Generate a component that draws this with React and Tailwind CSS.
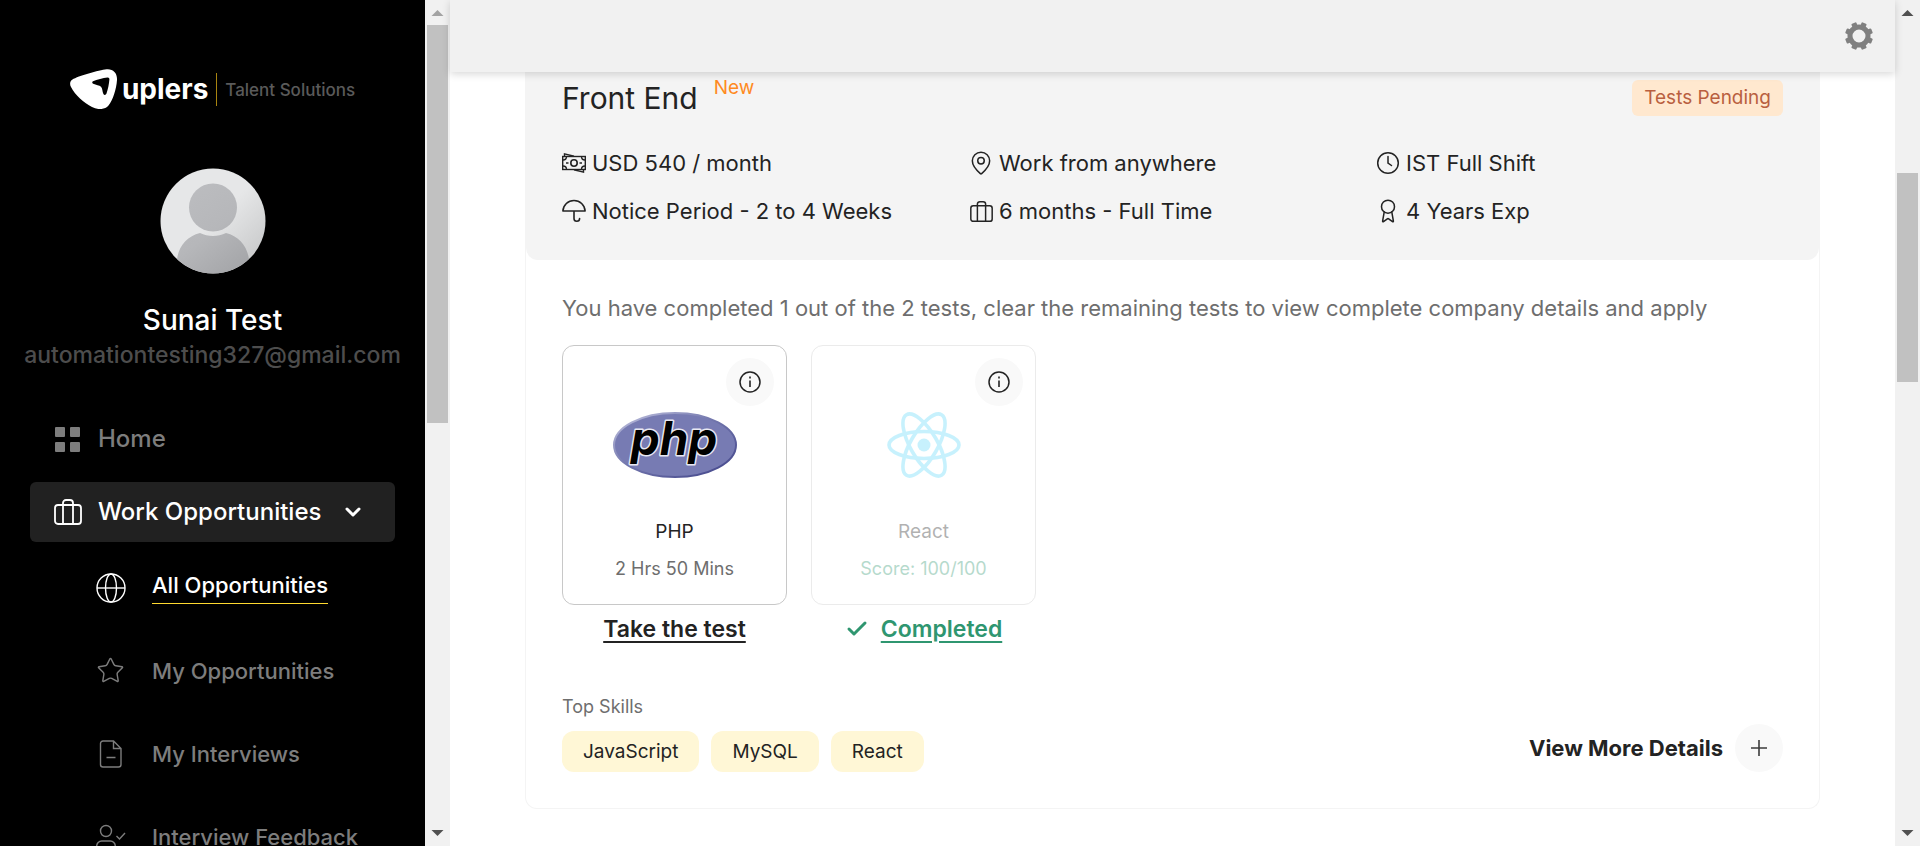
import React from 'react';
import { Star, MapPin, Award, Check } from 'lucide-react';

function Scrollbar({ atTop, thumb }) {
  return (
    <div aria-hidden="true" className="flex w-[25px] shrink-0 flex-col items-center bg-[#f1f1f1]">
      <svg width="25" height="25" viewBox="0 0 25 25" className="shrink-0">
        <path d="M6.5 16h12l-6-6z" fill={atTop ? '#a3a3a3' : '#505050'} />
      </svg>
      <div className="min-h-0 w-[21px] flex-1">
        <div className={thumb} />
      </div>
      <svg width="25" height="25" viewBox="0 0 25 25" className="shrink-0">
        <path d="M6.5 9h12l-6 6z" fill="#505050" />
      </svg>
    </div>
  );
}

function Suitcase({ size, stroke }) {
  return (
    <svg width={size} height={size} viewBox="0 0 28 28" fill="none" stroke="currentColor" strokeWidth={stroke}>
      <rect x="1" y="7" width="26" height="19" rx="3" />
      <path d="M9 26V5a3 3 0 0 1 3-3h4a3 3 0 0 1 3 3v21" />
    </svg>
  );
}

function Money() {
  return (
    <svg width="24" height="20" viewBox="0 0 24 20" fill="none" stroke="currentColor" strokeWidth="1.4">
      <rect x="0.7" y="3.5" width="22.6" height="13" />
      <circle cx="12" cy="10" r="3.2" strokeWidth="1.6" />
      <path d="M4 10h2.5M17.5 10H20M2.5 3.3V.9L12 3.3M21.5 16.7v2.4L12 16.7" />
      <path d="M1 7c2 0 3.5-1.5 3.5-3.5M23 7c-2 0-3.5-1.5-3.5-3.5M1 13c2 0 3.5 1.5 3.5 3.5M23 13c-2 0-3.5 1.5-3.5 3.5" />
    </svg>
  );
}

function Umbrella() {
  return (
    <svg width="24" height="24" viewBox="0 0 24 24" fill="none" stroke="currentColor" strokeWidth="1.6" strokeLinecap="round" strokeLinejoin="round">
      <path d="M.9 12C1.3 6 6 1.5 12 1.5S22.7 6 23.1 12zM12 12v7.500a2.800 2.800 0 0 0 5.600 0" />
    </svg>
  );
}

function Clock() {
  return (
    <svg width="24" height="24" viewBox="0 0 24 24" fill="none" stroke="currentColor" strokeWidth="1.5" strokeLinecap="round">
      <circle cx="12" cy="12" r="10.3" />
      <path d="M12 5.500V12l3.500 2.500" />
    </svg>
  );
}

function Globe() {
  return (
    <svg width="30" height="30" viewBox="0 0 30 30" fill="none" stroke="currentColor" strokeWidth="1.4">
      <circle cx="15" cy="15" r="14" />
      <ellipse cx="15" cy="15" rx="5.500" ry="14" />
      <path d="M1 15h28" />
    </svg>
  );
}

function Page() {
  return (
    <svg width="30" height="30" viewBox="0 0 30 30" fill="none" stroke="currentColor" strokeWidth="1.4">
      <path d="M17.500 2H7a2.500 2.500 0 0 0-2.500 2.500v21A2.500 2.500 0 0 0 7 28h15.500a2.500 2.500 0 0 0 2.500-2.500V9.500zV9.500H25M10.500 18.500h9" />
    </svg>
  );
}

function UserCheck() {
  return (
    <svg width="30" height="30" viewBox="0 0 30 30" fill="none" stroke="currentColor" strokeWidth="1.4">
      <circle cx="10" cy="9" r="5.500" />
      <path d="M.7 27v-3a5 5 0 0 1 5-5h8.600a5 5 0 0 1 5 5v3M20.500 14l3 3 5.500-6" />
    </svg>
  );
}

function Gear() {
  return (
    <svg width="28" height="28" viewBox="-14 -14 28 28">
      <circle r="9" fill="none" stroke="#808080" strokeWidth="5" />
      {[22.5, 67.5, 112.5, 157.5, 202.5, 247.5, 292.5, 337.5].map((a) => (
        <rect key={a} x="-2.700" y="-14" width="5.400" height="5" rx="1" fill="#808080" transform={`rotate(${a})`} />
      ))}
    </svg>
  );
}

function InfoIcon() {
  return (
    <svg width="22" height="22" viewBox="0 0 22 22" fill="none" stroke="#232323" strokeWidth="1.5">
      <circle cx="11" cy="11" r="10" />
      <path d="M11 9.500v6.500M11 5.500v2" strokeWidth="1.600" />
    </svg>
  );
}

function PhpLogo() {
  return (
    <svg width="124" height="66" viewBox="0 0 124 66" role="img" aria-label="PHP logo" className="overflow-visible">
      <defs>
        <linearGradient id="phpEdge" x1="0" y1="0" x2="1" y2="1">
          <stop offset="0" stopColor="#c4c6e2" />
          <stop offset=".45" stopColor="#7377ad" />
          <stop offset="1" stopColor="#3f4288" />
        </linearGradient>
      </defs>
      <ellipse cx="62" cy="33" rx="61" ry="32" fill="#777bb3" stroke="url(#phpEdge)" strokeWidth="2" />
      <text x="61" y="43" textAnchor="middle" fontFamily="Inter, sans-serif" fontSize="46" fontWeight="700" fontStyle="italic" fill="#000" stroke="#e8e8f2" strokeWidth="3" strokeLinejoin="round" paintOrder="stroke">
        php
      </text>
    </svg>
  );
}

function ReactLogo() {
  return (
    <svg width="76" height="66" viewBox="-38 -33 76 66" fill="none" stroke="#61dafb" strokeWidth="3.600" role="img" aria-label="React logo">
      <circle r="6.500" fill="#61dafb" stroke="none" />
      <ellipse rx="35" ry="13.500" />
      <ellipse rx="35" ry="13.500" transform="rotate(60)" />
      <ellipse rx="35" ry="13.500" transform="rotate(120)" />
    </svg>
  );
}

function Logo() {
  return (
    <a href="#" className="flex h-10 items-center text-white">
      <svg width="48" height="40" viewBox="0 0 48 40">
        <path d="M2.500 10.500C8 7 29 1 36.500.2 43-.5 47.500 4 47 11c-.6 9-4 20-8.500 25.500C34.500 41 27.500 41 22 38 14 34 5 26 1 18-.6 14.800 0 12 2.500 10.500z" fill="#fff" />
        <path d="M23 12.200c4-1.700 10-3.200 14.500-3.700 1.300-.1 2 .7 1.900 2-.4 4.500-1.400 9.800-3 14.300-.5 1.300-2.300 1.500-3 .2-1.200-2.600-.8-5.500-2.400-7.200-1.600-1.600-5-1.600-7.800-3-1.200-.6-1.300-2-.2-2.600z" fill="#000" />
      </svg>
      <span className="ml-1 text-[28px] leading-8 font-bold">uplers</span>
      <span className="ml-2 h-[33px] w-px bg-[#a88410]" />
      <span className="ml-2 pt-0.5 text-[17px] leading-6 font-medium text-[#5a5a5a]">Talent Solutions</span>
    </a>
  );
}

function Avatar() {
  return (
    <svg width="106" height="106" viewBox="0 0 106 106" role="img" aria-label="Profile picture">
      <defs>
        <clipPath id="avatarClip"><circle cx="53" cy="53" r="52.500" /></clipPath>
        <linearGradient id="avatarBg" x1="0" y1="0" x2="1" y2="1">
          <stop offset=".5" stopColor="#e6e7e8" />
          <stop offset=".9" stopColor="#c8c9ca" />
        </linearGradient>
        <linearGradient id="avatarFg" gradientUnits="userSpaceOnUse" x1="20" y1="20" x2="85" y2="106">
          <stop offset="0" stopColor="#bcbdc0" />
          <stop offset=".5" stopColor="#b6b7ba" />
          <stop offset="1" stopColor="#a2a3a6" />
        </linearGradient>
      </defs>
      <g clipPath="url(#avatarClip)">
        <rect width="106" height="106" fill="url(#avatarBg)" />
        <circle cx="53" cy="39.500" r="24" fill="url(#avatarFg)" />
        <path d="M17 106V92c1-13 10-24 23-27 8 4 18 4 26 0 13 3 22 14 23 27v14z" fill="url(#avatarFg)" />
      </g>
    </svg>
  );
}

function SubLink({ icon, label, active }) {
  return (
    <li className="flex h-[83px] items-center">
      <a href="#" className={active ? 'flex items-center text-white' : 'flex items-center text-[#7d7d7d]'}>
        <span className="flex w-[56px] items-center">{icon}</span>
        <span className={active ? 'border-b border-[#ffda30] pb-1 text-[22px] leading-7 font-medium' : 'text-[22px] leading-7 font-medium'}>{label}</span>
      </a>
    </li>
  );
}

function Fact({ icon, children }) {
  return (
    <li className="flex items-center gap-1.5">
      <span className="flex w-6 justify-center">{icon}</span>
      <span className="text-[22px] leading-[30px]">{children}</span>
    </li>
  );
}

function TestCard({ logo, name, note, noteColor, done, children }) {
  return (
    <li className="flex w-[225px] flex-col items-center">
      <div className={done ? 'relative w-full rounded-xl border border-[#ebebeb]' : 'relative w-full rounded-xl border border-[#c8c8c8]'}>
        <div className={done ? 'flex flex-col items-center pt-[66px] pb-[23px] opacity-35' : 'flex flex-col items-center pt-[66px] pb-[23px]'}>
          {logo}
          <h3 className="mt-[42px] text-[19px] leading-6">{name}</h3>
          <p className={`mt-[13px] text-[18px] leading-6 ${noteColor}`}>{note}</p>
        </div>
        <button type="button" aria-label={`About the ${name} test`} className="absolute top-3 right-3 flex size-12 items-center justify-center rounded-full bg-[#f9f9f9]">
          <InfoIcon />
        </button>
      </div>
      {children}
    </li>
  );
}

export default function App() {
  return (
    <div className="flex h-screen overflow-hidden bg-white font-['Inter',sans-serif] text-[#232323]">
      <aside className="flex w-[425px] shrink-0 flex-col overflow-hidden bg-black pt-[69px]">
        <div className="flex flex-col items-center">
          <Logo />
          <div className="mt-[59px]"><Avatar /></div>
          <p className="mt-7 text-[28px] leading-9 font-medium text-white">Sunai Test</p>
          <p className="mt-px text-[23px] leading-8 font-medium text-[#4d4d4d]">automationtesting327@gmail.com</p>
        </div>
        <nav className="mt-[38px] px-[30px]">
          <a href="#" className="flex h-[60px] items-center pl-[25px] text-2xl font-medium text-[#7d7d7d]">
            <svg width="25" height="25" viewBox="0 0 25 25" fill="currentColor">
              <rect width="10" height="10" rx="1" />
              <rect x="15" width="10" height="10" rx="1" />
              <rect y="15" width="10" height="10" rx="1" />
              <rect x="15" y="15" width="10" height="10" rx="1" />
            </svg>
            <span className="ml-[18px]">Home</span>
          </a>
          <button type="button" className="mt-[13px] flex h-[60px] w-full items-center rounded-md bg-[#212121] pl-6 text-2xl font-medium text-white">
            <Suitcase size={28} stroke={1.8} />
            <span className="ml-4">Work Opportunities</span>
            <svg width="16" height="11" viewBox="0 0 16 11" fill="none" stroke="currentColor" strokeWidth="3" strokeLinecap="round" strokeLinejoin="round" className="ml-6">
              <path d="M2 2l6 6 6-6" />
            </svg>
          </button>
          <ul className="mt-1 pl-[66px]">
            <SubLink active label="All Opportunities" icon={<Globe />} />
            <SubLink label="My Opportunities" icon={<Star size={29} strokeWidth={1.2} strokeLinejoin="miter" />} />
            <SubLink label="My Interviews" icon={<Page />} />
            <SubLink label="Interview Feedback" icon={<UserCheck />} />
          </ul>
        </nav>
      </aside>
      <Scrollbar atTop thumb="h-[398px] bg-[#c1c1c1]" />

      <div className="flex min-w-0 flex-1 flex-col">
        <header className="relative z-10 flex h-[72px] shrink-0 items-center justify-end bg-[#f1f1f1] px-[22px] shadow-[0_2px_8px_rgba(0,0,0,0.16)]">
          <button type="button" aria-label="Settings"><Gear /></button>
        </header>
        <main className="px-[75px]">
          <article className="rounded-b-xl border border-t-0 border-[#f4f4f4]">
            <header className="rounded-b-xl bg-[#f4f4f4] px-9 pt-2 pb-[34px]">
              <div className="flex h-9 items-center">
                <h1 className="text-[30px] leading-9">Front End</h1>
                <span className="ml-4 self-start text-[19px] leading-4 text-[#ff8a1f]">New</span>
                <span className="ml-auto rounded-md bg-[#ffe8cf] px-3 text-[19px] leading-9 text-[#b95f3f]">Tests Pending</span>
              </div>
              <ul className="mt-8 grid grid-cols-3 gap-y-[18px]">
                <Fact icon={<Money />}>USD 540 / month</Fact>
                <Fact icon={<MapPin size={26} strokeWidth={1.4} className="shrink-0" />}>Work from anywhere</Fact>
                <Fact icon={<Clock />}>IST Full Shift</Fact>
                <Fact icon={<Umbrella />}>Notice Period - 2 to 4 Weeks</Fact>
                <Fact icon={<Suitcase size={23} stroke={1.8} />}>6 months - Full Time</Fact>
                <Fact icon={<Award size={26} strokeWidth={1.4} className="shrink-0" />}>4 Years Exp</Fact>
              </ul>
            </header>
            <div className="px-9 pt-[33px] pb-9">
              <p className="text-[22px] leading-[30px] text-[#6e6e6e]">
                You have completed 1 out of the 2 tests, clear the remaining tests to view complete company details and apply
              </p>
              <ul className="mt-[22px] flex gap-6">
                <TestCard name="PHP" note="2 Hrs 50 Mins" noteColor="text-[#6e6e6e]" logo={<PhpLogo />}>
                  <a href="#" className="mt-2.5 text-[23px] leading-7 font-semibold underline decoration-2 underline-offset-4">Take the test</a>
                </TestCard>
                <TestCard done name="React" note="Score: 100/100" noteColor="text-[#2f9670]" logo={<ReactLogo />}>
                  <span className="mt-2.5 flex items-center gap-3 text-[#2f9670]">
                    <Check size={24} strokeWidth={3} />
                    <a href="#" className="text-[23px] leading-7 font-semibold underline decoration-2 underline-offset-4">Completed</a>
                  </span>
                </TestCard>
              </ul>
              <div className="mt-[53px] flex items-end justify-between">
                <div>
                  <h2 className="text-[18px] leading-[22px] text-[#6e6e6e]">Top Skills</h2>
                  <ul className="mt-[13px] flex gap-3 text-[19px] leading-[41px]">
                    <li className="rounded-xl bg-[#fff7d6] px-[21px]">JavaScript</li>
                    <li className="rounded-xl bg-[#fff7d6] px-[21px]">MySQL</li>
                    <li className="rounded-xl bg-[#fff7d6] px-[21px]">React</li>
                  </ul>
                </div>
                <button type="button" className="flex items-center gap-3 text-[22px] font-bold">
                  View More Details
                  <span className="flex size-12 items-center justify-center rounded-full bg-[#f9f9f9]">
                    <svg width="16" height="16" viewBox="0 0 16 16" stroke="#3c3c3c" strokeWidth="1.600"><path d="M8 0v16M0 8h16" /></svg>
                  </span>
                </button>
              </div>
            </div>
          </article>
        </main>
      </div>
      <Scrollbar thumb="mt-[148px] h-[209px] bg-[#c1c1c1]" />
    </div>
  );
}
